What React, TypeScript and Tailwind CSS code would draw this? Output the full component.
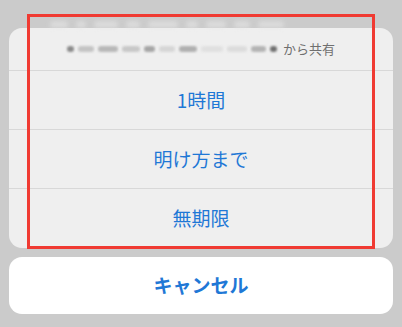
import React from 'react';

const font = { fontFamily: '"Noto Sans CJK JP", "Noto Sans", sans-serif' };

// blurred-out sender name (redacted in the screenshot)
const blots = [
  { w: 7, c: 'bg-[#8a8a8a]' },
  { w: 16, c: 'bg-[#c4c4c4]' },
  { w: 20, c: 'bg-[#b8b8b8]' },
  { w: 18, c: 'bg-[#c8c8c8]' },
  { w: 11, c: 'bg-[#a6a6a6]' },
  { w: 16, c: 'bg-[#d6d6d6]' },
  { w: 18, c: 'bg-[#b0b0b0]' },
  { w: 22, c: 'bg-[#e0e0e0]' },
  { w: 20, c: 'bg-[#dcdcdc]' },
  { w: 15, c: 'bg-[#b4b4b4]' },
  { w: 7, c: 'bg-[#707070]' },
];

function Row({ label, last }: { label: string; last?: boolean }) {
  return (
    <div className={`h-[59px] flex items-center justify-center text-[19px] text-[#1f78d6] ${last ? '' : 'border-b border-[#d8d8d8]'}`}>
      {label}
    </div>
  );
}

export default function App() {
  return (
    <div className="relative w-[402px] h-[327px] bg-[#cbcbcb] px-[9px] pt-[28px] overflow-hidden" style={font}>
      {/* blurred backdrop above sheet */}
      <div className="absolute left-[50px] top-[21px] w-[300px] h-[7px] flex gap-[8px] blur-[2px] opacity-60">
        {[18, 10, 24, 14, 30, 12, 20, 16, 26].map((w, i) => (
          <div key={i} className="h-full bg-[#e6e6e6] rounded" style={{ width: w }} />
        ))}
      </div>

      <div className="rounded-[13px] bg-[#efefef] overflow-hidden">
        <div className="h-[43px] flex items-center justify-center gap-[6px] border-b border-[#d8d8d8]">
          <div className="flex items-center gap-[4px] blur-[1px]">
            {blots.map((b, i) => (
              <div key={i} className={`h-[6px] rounded-sm ${b.c}`} style={{ width: b.w }} />
            ))}
          </div>
          <span className="text-[13px] text-[#6f6f6f]">から共有</span>
        </div>
        <Row label="1時間" />
        <Row label="明け方まで" />
        <Row label="無期限" last />
      </div>

      <div className="mt-[9px] h-[57px] rounded-[13px] bg-white flex items-center justify-center text-[19px] font-bold text-[#1f78d6]">
        キャンセル
      </div>

      {/* red highlight annotation */}
      <div className="absolute left-[27px] top-[14px] w-[348px] h-[235px] border-[3px] border-[#f03a32] pointer-events-none" />
    </div>
  );
}
